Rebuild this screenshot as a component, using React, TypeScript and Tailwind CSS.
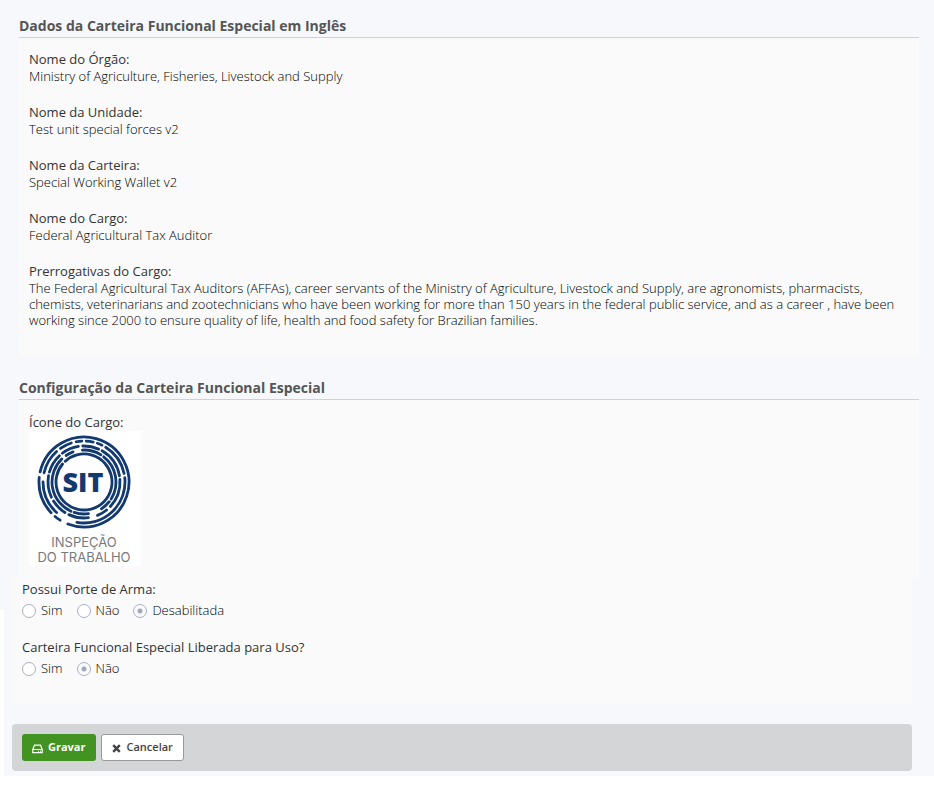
import { useState } from "react";
import type { ReactNode } from "react";

const FIELDS = [
  { label: "Nome do Órgão:", value: "Ministry of Agriculture, Fisheries, Livestock and Supply" },
  { label: "Nome da Unidade:", value: "Test unit special forces v2" },
  { label: "Nome da Carteira:", value: "Special Working Wallet v2" },
  { label: "Nome do Cargo:", value: "Federal Agricultural Tax Auditor" },
  {
    label: "Prerrogativas do Cargo:",
    value:
      "The Federal Agricultural Tax Auditors (AFFAs), career servants of the Ministry of Agriculture, Livestock and Supply, are agronomists, pharmacists, chemists, veterinarians and zootechnicians who have been working for more than 150 years in the federal public service, and as a career , have been working since 2000 to ensure quality of life, health and food safety for Brazilian families.",
  },
];

// Arcs of the emblem: radius, start and end in degrees, clockwise from the top.
const ARCS: [number, number, number][] = [
  [45, 283, 201],
  [45, 212, 220],
  [45, 227, 276],
  [41, 349, 357],
  [41, 3, 13],
  [41, 19, 26],
  [41, 32, 78],
  [41, 84, 190],
  [41, 222, 270],
  [41, 283, 318],
  [41, 325, 342],
  [36, 358, 24],
  [36, 30, 80],
  [36, 86, 133],
  [36, 141, 158],
  [36, 173, 205],
  [36, 212, 238],
  [36, 245, 280],
  [36, 286, 317],
  [36, 323, 351],
  [32, 357, 32],
  [32, 38, 122],
  [32, 128, 147],
  [32, 172, 198],
  [32, 204, 316],
  [32, 326, 340],
  [28, 318, 310],
];

function arcPath(radius: number, from: number, to: number): string {
  const point = (deg: number) => {
    const a = (deg * Math.PI) / 180;
    return `${(55 + radius * Math.sin(a)).toFixed(2)} ${(51 - radius * Math.cos(a)).toFixed(2)}`;
  };
  const sweep = (to - from + 360) % 360;
  return `M ${point(from)} A ${radius} ${radius} 0 ${sweep > 180 ? 1 : 0} 1 ${point(to)}`;
}

function Emblem() {
  return (
    <svg viewBox="0 0 112 135" className="h-[135px] w-28 bg-white" role="img" aria-label="SIT">
      {ARCS.map(([r, from, to]) => (
        <path
          key={`${r}-${from}`}
          d={arcPath(r, from, to)}
          fill="none"
          stroke="#123a70"
          strokeWidth="2.8"
          strokeLinecap="round"
        />
      ))}
      <text
        x="54"
        y="61"
        textAnchor="middle"
        fontSize="27"
        fontWeight="800"
        fill="#123a70"
        className="font-['Open_Sans',sans-serif]"
      >
        SIT
      </text>
      <g fill="#77797c" fontSize="13" textAnchor="middle" className="font-['Inter',sans-serif] font-normal">
        <text x="55" y="116">INSPEÇÃO</text>
        <text x="55" y="131">DO TRABALHO</text>
      </g>
    </svg>
  );
}

function SectionTitle({ children }: { children: ReactNode }) {
  return (
    <h2 className="border-b border-[#d0d1d4] pb-px text-sm leading-5 font-bold text-[#555]">
      {children}
    </h2>
  );
}

interface RadioGroupProps {
  legend: string;
  name: string;
  options: string[];
  initial: string;
}

function RadioGroup({ legend, name, options, initial }: RadioGroupProps) {
  const [selected, setSelected] = useState(initial);
  return (
    <fieldset>
      <legend className="leading-[18px] font-medium text-[#333]">{legend}</legend>
      <div className="mt-[3px] flex gap-3.5">
        {options.map((option) => (
          <label key={option} className="flex items-center gap-[5px] leading-[18px]">
            <input
              type="radio"
              name={name}
              checked={selected === option}
              onChange={() => setSelected(option)}
              className="mt-0.5 size-3.5 appearance-none rounded-full border border-[#a9b0c3] bg-white checked:bg-[radial-gradient(circle,#a0a8bd_2px,#fafafa_3px)]"
            />
            {option}
          </label>
        ))}
      </div>
    </fieldset>
  );
}

function SaveIcon() {
  return (
    <svg viewBox="0 0 11 10" className="mt-0.5 h-2.5 w-[11px]" fill="none" stroke="currentColor" aria-hidden="true">
      <path d="M.8 5.3 2.5 1.2h6l1.7 4.1v3.4H.8zM.8 5.5h9.4" strokeWidth="1.2" />
      <path d="M6 7.2h1M8 7.2h1" strokeWidth="1" />
    </svg>
  );
}

function CloseIcon() {
  return (
    <svg viewBox="0 0 9 9" className="mt-0.5 size-[9px]" stroke="currentColor" aria-hidden="true">
      <path d="m1.2 1.2 6.6 6.6M7.8 1.2 1.2 7.8" strokeWidth="2.4" />
    </svg>
  );
}

export default function App() {
  return (
    <div className="min-h-screen bg-white font-['Open_Sans',sans-serif] text-[13px] font-light text-black">
      <main className="bg-[#f6f8fc] pt-4 pb-[5px]">
        <section className="mr-[15px] ml-[19px]">
          <SectionTitle>Dados da Carteira Funcional Especial em Inglês</SectionTitle>
          <dl className="flex flex-col gap-[19px] rounded-b bg-[#fafafa] px-2.5 pt-3 pb-7">
            {FIELDS.map((field) => (
              <div key={field.label}>
                <dt className="leading-[18px] font-medium text-[#333]">{field.label}</dt>
                <dd className="leading-4">{field.value}</dd>
              </div>
            ))}
          </dl>
        </section>

        <section className="mt-[22px] mr-[15px] ml-[19px]">
          <SectionTitle>Configuração da Carteira Funcional Especial</SectionTitle>
          <div className="bg-[#fafafa] px-2.5 pt-[13px] pb-3">
            <p className="leading-[18px] font-medium text-[#333]">Ícone do Cargo:</p>
            <Emblem />
          </div>
        </section>

        {/* white gutter runs down the left edge from the first row of options */}
        <form
          className="-mb-[5px] bg-[linear-gradient(#fff,#fff)] bg-[length:4px_100%] bg-[position:0_32px] bg-no-repeat pr-[22px] pb-[5px] pl-3"
          onSubmit={(e) => e.preventDefault()}
        >
          <div className="flex flex-col gap-[19px] rounded bg-[#fafafa] px-2.5 pt-0.5 pb-7">
            <RadioGroup
              legend="Possui Porte de Arma:"
              name="porte"
              options={["Sim", "Não", "Desabilitada"]}
              initial="Desabilitada"
            />
            <RadioGroup
              legend="Carteira Funcional Especial Liberada para Uso?"
              name="liberada"
              options={["Sim", "Não"]}
              initial="Não"
            />
          </div>
          <div className="mt-[19px] flex gap-[5px] rounded bg-[#d4d5d7] p-2.5 text-[11px]">
            <button
              type="submit"
              className="flex h-[27px] items-center gap-[5px] rounded-[3px] bg-[#429321] px-2.5 font-bold text-white"
            >
              <SaveIcon />
              Gravar
            </button>
            <button
              type="button"
              className="flex h-[27px] items-center gap-1.5 rounded-[3px] border border-[#999] bg-white px-2.5 font-semibold text-[#444]"
            >
              <CloseIcon />
              Cancelar
            </button>
          </div>
        </form>
      </main>
    </div>
  );
}
